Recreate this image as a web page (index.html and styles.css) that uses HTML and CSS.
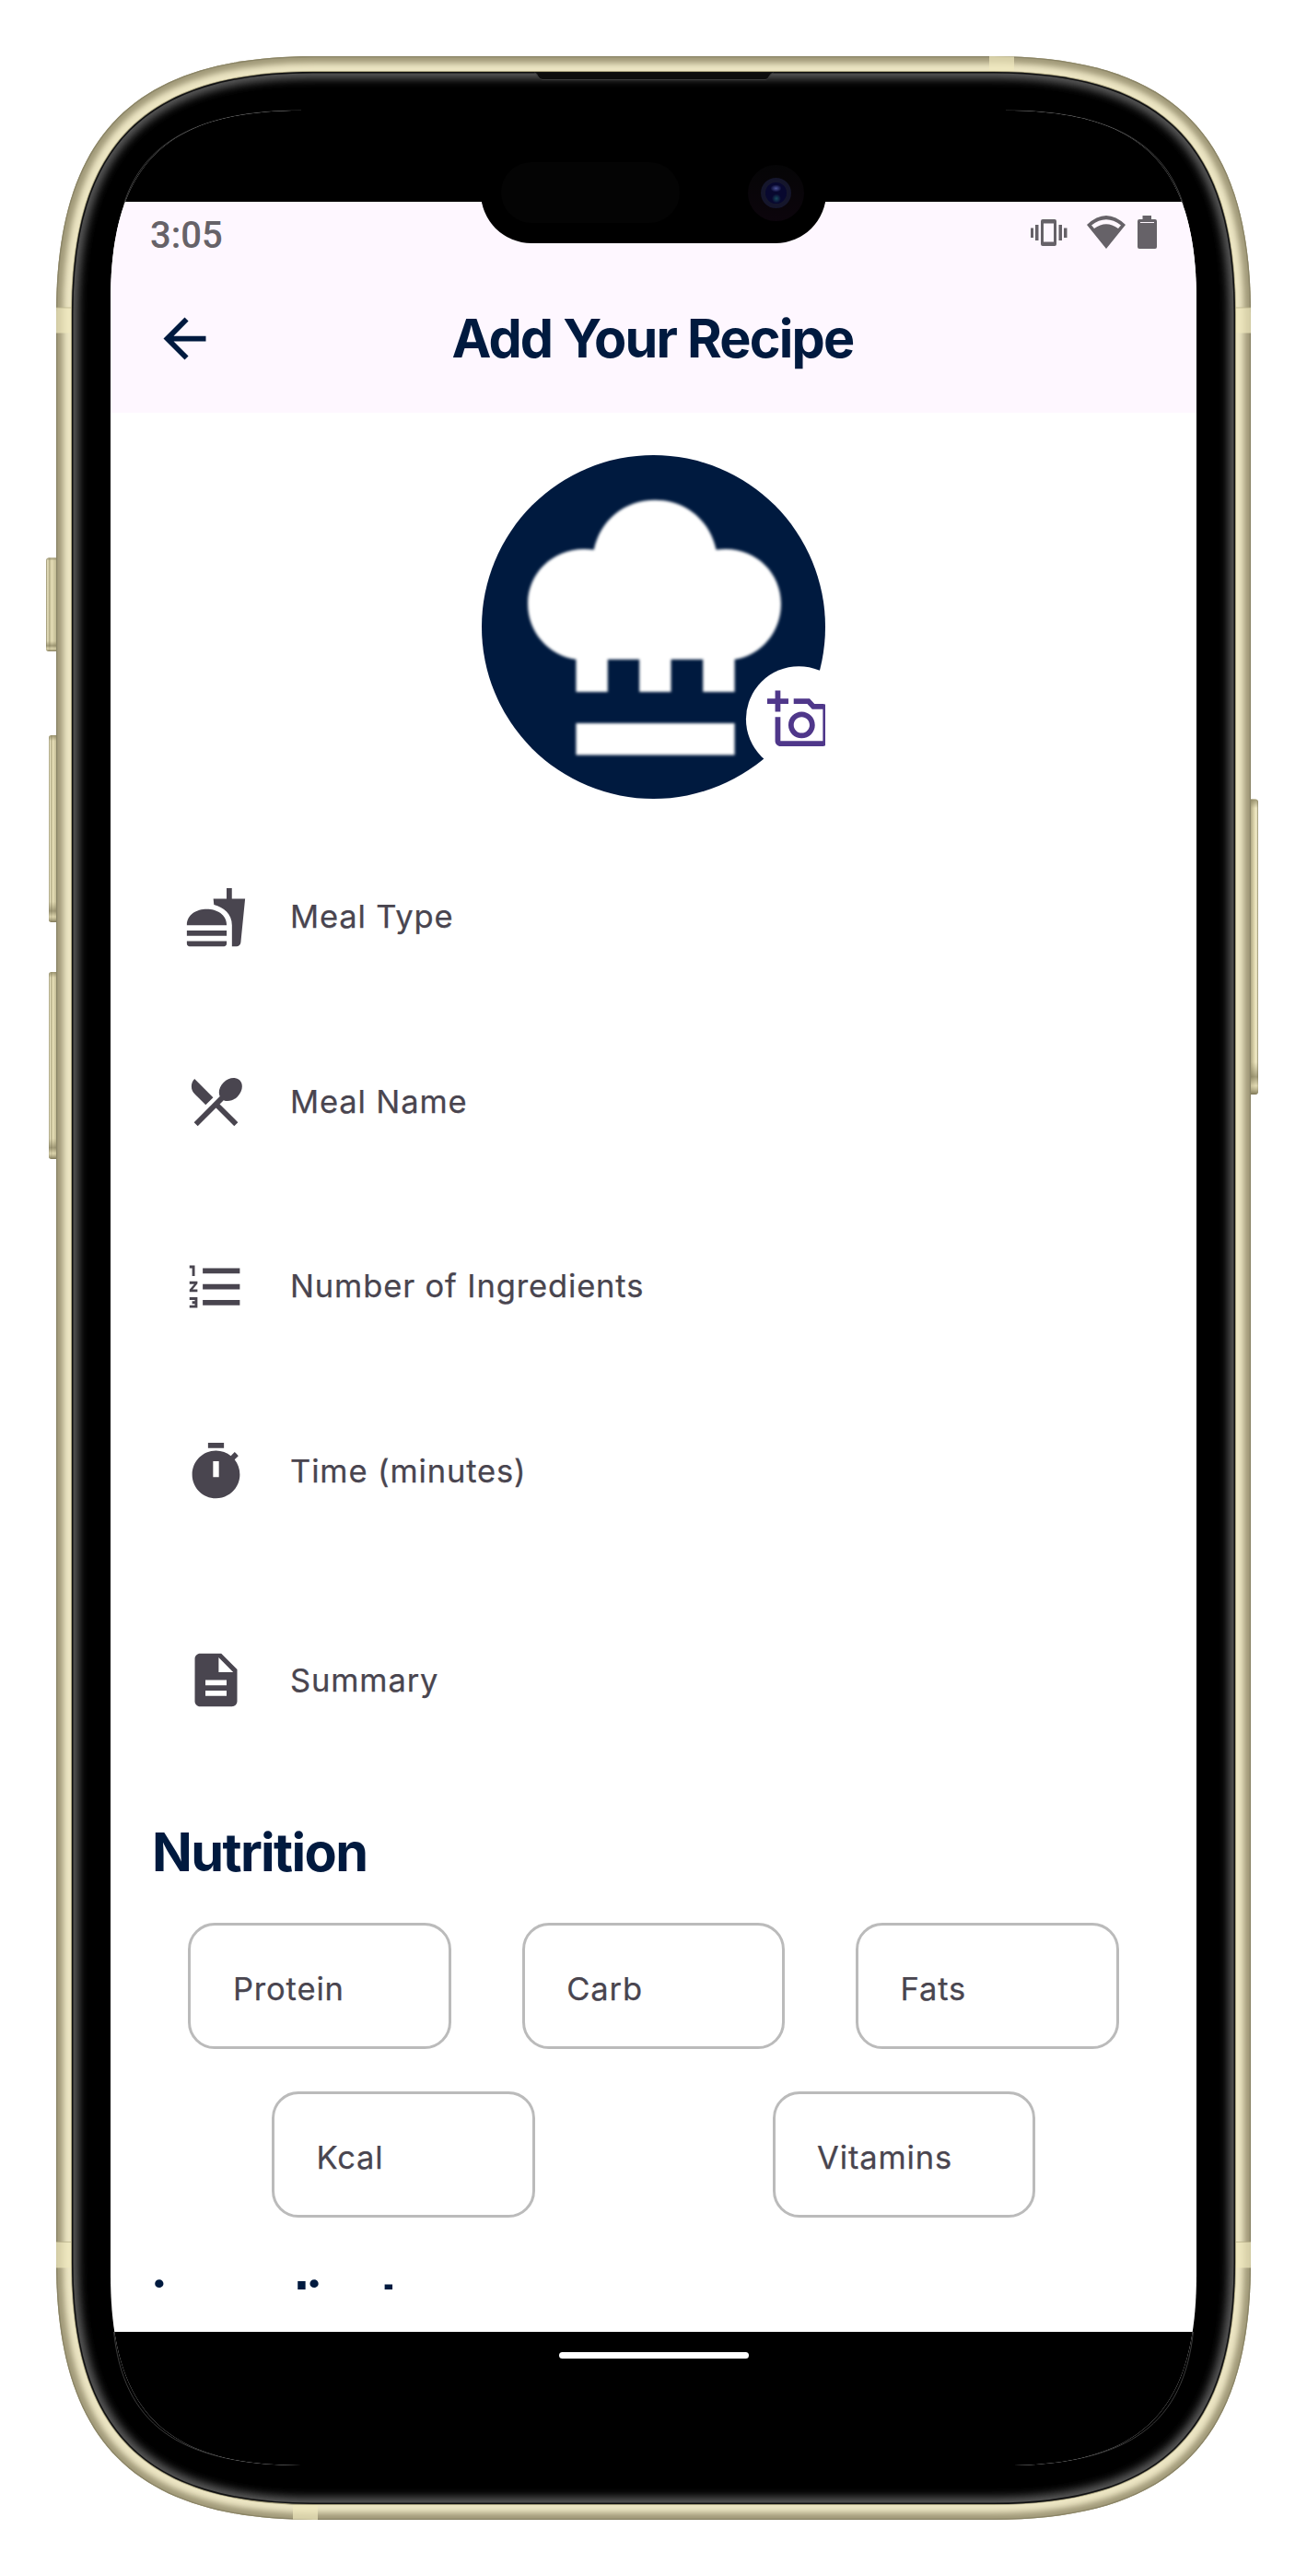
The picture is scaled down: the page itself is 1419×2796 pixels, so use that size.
FILE: index.html
```html
<!DOCTYPE html>
<html lang="en">
<head>
<meta charset="utf-8">
<title>Add Your Recipe</title>
<link rel="stylesheet" href="styles.css">
</head>
<body>
<div class="device">
  <svg class="device-body" viewBox="0 0 1419 2796" aria-hidden="true">
    <defs>
      <path id="shell" d="M341 61H1078C1273 61 1358 146 1358 341V2455C1358 2650 1273 2735 1078 2735H341C146 2735 61 2650 61 2455V341C61 146 146 61 341 61Z"/>
      <path id="glass" d="M341 78H1078C1262 78 1341 157 1341 341V2455C1341 2639 1262 2718 1078 2718H341C157 2718 78 2639 78 2455V341C78 157 157 78 341 78Z"/>
      <clipPath id="shell-clip"><use href="#shell"/></clipPath>
      <clipPath id="glass-clip"><use href="#glass"/></clipPath>
      <filter id="soft" x="-5%" y="-5%" width="110%" height="110%"><feGaussianBlur stdDeviation="3"/></filter>
      <filter id="glow" x="-5%" y="-5%" width="110%" height="110%"><feGaussianBlur stdDeviation="5"/></filter>
      <linearGradient id="btn-l" x1="0" x2="1"><stop offset="0" stop-color="#8e8868"/><stop offset=".15" stop-color="#eee8c4"/><stop offset=".3" stop-color="#b5ae88"/><stop offset=".5" stop-color="#e6deb6"/><stop offset="1" stop-color="#b9b28c"/></linearGradient>
      <linearGradient id="btn-r" x1="1" x2="0"><stop offset="0" stop-color="#8e8868"/><stop offset=".2" stop-color="#f4eecb"/><stop offset=".5" stop-color="#ddd5ac"/><stop offset="1" stop-color="#a59e7a"/></linearGradient>
      <linearGradient id="btn-ends" x2="0" y2="1"><stop offset="0" stop-color="#8a8360" stop-opacity=".8"/><stop offset=".03" stop-color="#8a8360" stop-opacity="0"/><stop offset=".89" stop-color="#8a8360" stop-opacity="0"/><stop offset=".94" stop-color="#7d7656" stop-opacity=".65"/><stop offset=".97" stop-color="#d8d0a8" stop-opacity=".6"/><stop offset="1" stop-color="#7d7656"/></linearGradient>
      <path id="mute" d="M62 605.500H53Q50 605.500 50 609V703.500Q50 707 53 707H62Z"/>
      <path id="vol-up" d="M62 798H56Q53 798 53 801V998Q53 1001 56 1001H62Z"/>
      <path id="vol-down" d="M62 1055H56Q53 1055 53 1058V1255Q53 1258 56 1258H62Z"/>
      <path id="power" d="M1357 867.500H1363Q1366 867.500 1366 871V1184Q1366 1188 1363 1188H1357Z"/>
    </defs>
    <g fill="url(#btn-l)"><use href="#mute"/><use href="#vol-up"/><use href="#vol-down"/></g>
    <use href="#power" fill="url(#btn-r)"/>
    <g fill="url(#btn-ends)"><use href="#mute"/><use href="#vol-up"/><use href="#vol-down"/><use href="#power"/></g>
    <g clip-path="url(#shell-clip)">
      <use href="#shell" fill="#ece5c3"/>
      <use href="#shell" fill="none" stroke="#a09978" stroke-width="15" filter="url(#soft)"/>
      <use href="#shell" fill="none" stroke="#8b8567" stroke-width="2.500"/>
      <g fill="#efe8be" fill-opacity=".7">
        <path d="M61 334H78V361.500H61ZM1341 334H1358V361.500H1341ZM61 2434H78V2461.500H61ZM1341 2434H1358V2461.500H1341ZM1074 61H1101V78H1074ZM318 2718H345V2735H318Z"/>
      </g>
      <path stroke="#bcb48c" stroke-opacity=".8" d="M61 334H78M1341 334H1358M61 2433.500H78M1341 2433.500H1358"/>
    </g>
    <use href="#glass" fill="#000" stroke="#aaa37d" stroke-width="2"/>
    <g clip-path="url(#glass-clip)">
      <use href="#glass" fill="none" stroke="#5a5a5a" stroke-width="15" filter="url(#glow)"/>
      <use href="#glass" fill="none" stroke="#111" stroke-width="3"/>
    </g>
    <path fill="#0d0d0d" stroke="#3c3c3c" d="M580 79Q583 79 584 83Q586 86.500 589 86.500H831Q834 86.500 835 83Q837 79 840 79"/>
  </svg>

  <main class="screen">
    <div class="cutout">
      <div class="island">
        <div class="sensor"></div>
        <div class="camera"><div class="lens"></div></div>
      </div>
    </div>
    <header class="top">
      <div class="status">
        <span class="clock">3:05</span>
        <svg class="status-icons" width="140" height="40" viewBox="0 0 140 40" aria-hidden="true">
          <g fill="#666268">
            <path fill-rule="evenodd" d="M14 5H27Q29 5 29 7V32Q29 34 27 34H14Q12 34 12 32V7Q12 5 14 5ZM15 9.500V29.500H26V9.500Z"/>
            <path d="M6 11H9.500V28H6ZM1 14.500H4V25H1ZM31.500 11H35V28H31.500ZM37 14.500H40.500V25H37Z"/>
            <path fill-rule="evenodd" d="M62 11Q83 -9 104 11L83 37ZM67 11.500L70 15Q83 5.500 96 15L99 11.500Q83 -1 67 11.500Z"/>
            <path d="M122.500 1H132V5H136Q138 5 138 7V35Q138 37 136 37H119Q117 37 117 35V7Q117 5 119 5H122.500Z"/>
          </g>
          <path stroke="#fef7ff" d="M120 8.500H135"/>
        </svg>
      </div>
      <div class="appbar">
        <svg class="back" width="69" height="69" viewBox="0 0 24 24" aria-hidden="true"><path fill="#001a3f" d="M20 11H7.830l5.590-5.590L12 4l-8 8 8 8 1.410-1.410L7.830 13H20v-2z"/></svg>
        <h1>Add Your Recipe</h1>
      </div>
    </header>

    <section class="content">
      <svg class="avatar" width="373" height="373" viewBox="70 72 1118 1118" aria-hidden="true">
        <defs><filter id="hat-soft"><feGaussianBlur stdDeviation="4"/></filter></defs>
        <circle cx="629" cy="631" r="559" fill="#001a3f"/>
        <g fill="#fff" filter="url(#hat-soft)">
          <path d="M435 380C455 285 532 218 634 218C736 218 812 285 833 380C950 362 1044 448 1044 555C1044 648 980 722 893 737V842H790V737H686V842H583V737H480V842H377V737C286 722 220 648 220 555C220 448 315 362 435 380Z"/>
          <path d="M377 944H893V1048H377Z"/>
        </g>
        <circle cx="1102" cy="931" r="172" fill="#fff"/>
        <path fill="#4f378a" transform="translate(999 829.400) scale(8.625)" d="M3 4V1h2v3h3v2H5v3H3V6H0V4zM21 6h-3.170L16 4h-6v2h5.120l1.830 2H21v12H5v-9H3v9c0 1.100.900 2 2 2h16c1.100 0 2-.900 2-2V8c0-1.100-.900-2-2-2zM8 14c0 2.760 2.240 5 5 5s5-2.240 5-5-2.240-5-5-5-5 2.240-5 5zm5-3c1.650 0 3 1.350 3 3s-1.350 3-3 3-3-1.350-3-3 1.350-3 3-3z"/>
      </svg>

      <div class="fields">
        <div class="field">
          <svg class="icon" viewBox="0 0 24 24"><path d="M1 21.980C1 22.540 1.450 23 2.010 23h13.010c.560 0 1.010-.450 1.010-1.010V21H1zM8.500 8.990C4.750 8.990 1 11 1 15h15.030C16 11 12.250 8.990 8.500 8.990zM1 17h15.030v2H1zM18 5V1h-2v4h-5l.230 2.310C14.900 8.320 18.030 10.790 18.030 15V23h1.690c.840 0 1.530-.650 1.630-1.470L23 5z"/></svg>
          <span>Meal Type</span>
        </div>
        <div class="field">
          <svg class="icon" viewBox="0 0 24 24"><path d="M8.100 13.340l2.830-2.830L3.910 3.500c-1.560 1.560-1.560 4.090 0 5.660l4.190 4.180zm6.780-1.810c1.530.710 3.680.210 5.270-1.380 1.910-1.910 2.280-4.650.810-6.120-1.460-1.460-4.200-1.100-6.120.810-1.590 1.590-2.090 3.740-1.380 5.270L3.700 19.870l1.410 1.410L12 14.410l6.880 6.880 1.410-1.410L13.410 13l1.470-1.470z"/></svg>
          <span>Meal Name</span>
        </div>
        <div class="field">
          <svg class="icon" viewBox="0 0 24 24"><path d="M2 17h2v.5H3v1h1v.5H2v1h3v-4H2v1zm1-9h1V4H2v1h1v3zm-1 3h1.800L2 13.100v.9h3v-1H3.200L5 10.900V10H2v1zm5-6v2h14V5H7zm0 14h14v-2H7v2zm0-6h14v-2H7v2z"/></svg>
          <span>Number of Ingredients</span>
        </div>
        <div class="field">
          <svg class="icon" viewBox="0 0 24 24"><path fill-rule="evenodd" d="M9 1h6v2H9zM19.030 7.390l1.420-1.420c-.430-.510-.900-.990-1.410-1.410l-1.420 1.420C16.070 4.740 14.120 4 12 4c-4.970 0-9 4.030-9 9s4.020 9 9 9 9-4.030 9-9c0-2.120-.740-4.070-1.970-5.610zM10.900 8h2.200v6h-2.200z"/></svg>
          <span>Time (minutes)</span>
        </div>
        <div class="field field-tall">
          <svg class="icon" viewBox="0 0 24 24"><path fill-rule="evenodd" d="M14 2H6c-1.100 0-1.990.900-1.990 2L4 20c0 1.100.890 2 1.990 2H18c1.100 0 2-.900 2-2V8zM16 18H8v-2h8zM16 14H8v-2h8zM13 9V3.500L18.500 9z"/></svg>
          <span>Summary</span>
        </div>
      </div>

      <h2>Nutrition</h2>
      <div class="row">
        <div class="box"><span>Protein</span></div>
        <div class="box"><span>Carb</span></div>
        <div class="box"><span>Fats</span></div>
      </div>
      <div class="row">
        <div class="box"><span>Kcal</span></div>
        <div class="box"><span>Vitamins</span></div>
      </div>
      <h2 class="next">ingredients</h2>
    </section>

    <footer class="navbar"><div class="home"></div></footer>
  </main>

  <svg class="screen-edge" viewBox="0 0 1419 2796" aria-hidden="true">
    <path d="M134 223C152 164 202 120 327 120M1285 223C1267 164 1217 120 1092 120M123.500 2531C134 2628 190 2675.500 327 2675.500M1295.500 2531C1285 2628 1229 2675.500 1092 2675.500"/>
  </svg>
</div>
</body>
</html>
```
FILE: styles.css
```css
* { box-sizing: border-box; margin: 0; }

body {
  background: #fff;
  color: #49454f;
  font-family: Inter, "Liberation Sans", sans-serif;
}

.device {
  display: grid;
  width: 1419px;
  height: 2796px;
}

.device-body,
.screen,
.screen-edge { grid-area: 1 / 1; }

.device-body,
.screen-edge {
  display: block;
  width: 1419px;
  height: 2796px;
}

.screen-edge {
  fill: none;
  stroke: #777;
  stroke-width: .5;
}

.screen {
  display: flex;
  flex-direction: column;
  width: 1179px;
  height: 2556px;
  margin: 120px 0 0 120px;
  background: #fff;
  clip-path: path("M207 0H972C1120 0 1179 59 1179 207V2349C1179 2497 1120 2556 972 2556H207C59 2556 0 2497 0 2349V207C0 59 59 0 207 0Z");
}

/* camera cutout */
.cutout {
  flex: none;
  height: 99px;
  padding-top: 34px;
  background: #000;
}

.island {
  position: relative;
  z-index: 1;
  display: flex;
  align-items: center;
  justify-content: space-between;
  width: 375px;
  height: 110px;
  margin: 0 auto;
  padding: 0 24px 0 22px;
  border-radius: 55px;
  background: #000;
}

.sensor {
  width: 194px;
  height: 66px;
  border-radius: 33px;
  background: #040404;
}

.camera {
  display: grid;
  place-items: center;
  width: 61px;
  height: 61px;
  border-radius: 50%;
  background: linear-gradient(#050506, #0c050c);
}

.lens {
  width: 33px;
  height: 33px;
  border: 5px solid #15162c;
  border-radius: 50%;
  background:
    radial-gradient(ellipse 6px 4px at 50% 28%, #4a5296, transparent),
    radial-gradient(circle 5px at 52% 76%, #174a5c, transparent),
    #08082f;
}

/* status and app bar */
.top {
  flex: none;
  height: 229px;
  background: #fef7ff;
}

.status {
  display: flex;
  align-items: flex-start;
  justify-content: space-between;
  height: 80px;
  padding: 14px 41px 0 43px;
}

.clock {
  padding-top: 3px;
  color: #666268;
  font: 500 40px/40px Roboto, sans-serif;
}

.appbar {
  display: grid;
  grid-template-columns: 69px 1fr 69px;
  align-items: center;
  height: 137px;
  padding: 0 46px;
}

h1,
h2 {
  color: #001a3f;
  font-size: 57.5px;
  font-weight: 700;
  line-height: 70px;
  letter-spacing: -1.6px;
  white-space: nowrap;
}

h1 {
  letter-spacing: -1.8px;
  text-align: center;
  padding: 0 2px 1px 0;
}

/* form */
.content {
  flex: none;
  height: 2083px;
  overflow: hidden;
  padding: 46px 46px 0;
}

.avatar {
  display: block;
  margin: 0 auto;
}

.fields {
  padding: 28px 34px 0;
}

.field {
  display: flex;
  align-items: center;
  gap: 46px;
  height: 200.600px;
}

.field-tall { height: 253px; }

.icon {
  flex: none;
  width: 69px;
  height: 69px;
  fill: #49454f;
}

.field span,
.box span {
  font-size: 34.500px;
  line-height: 42px;
  letter-spacing: .860px;
  white-space: nowrap;
  -webkit-text-stroke: .25px #49454f;
}

h2 {
  height: 70px;
  margin: 24.500px 0 0 -1px;
}

.row {
  display: flex;
  justify-content: space-around;
  height: 137px;
  margin-top: 42.500px;
}

.row + .row { margin-top: 46px; }

.box {
  display: flex;
  align-items: center;
  width: 285.500px;
  height: 137px;
  padding: 6px 0 0 45.500px;
  border: 3px solid #bbb;
  border-radius: 29px;
}

.next {
  height: 23px;
  margin-top: 54.500px;
  letter-spacing: -2px;
  overflow: hidden;
}

/* system navigation */
.navbar {
  flex: none;
  height: 145px;
  padding-top: 22px;
  background: #000;
}

.home {
  width: 206px;
  height: 7px;
  margin: 0 auto;
  border-radius: 4px;
  background: #fff;
}
```
